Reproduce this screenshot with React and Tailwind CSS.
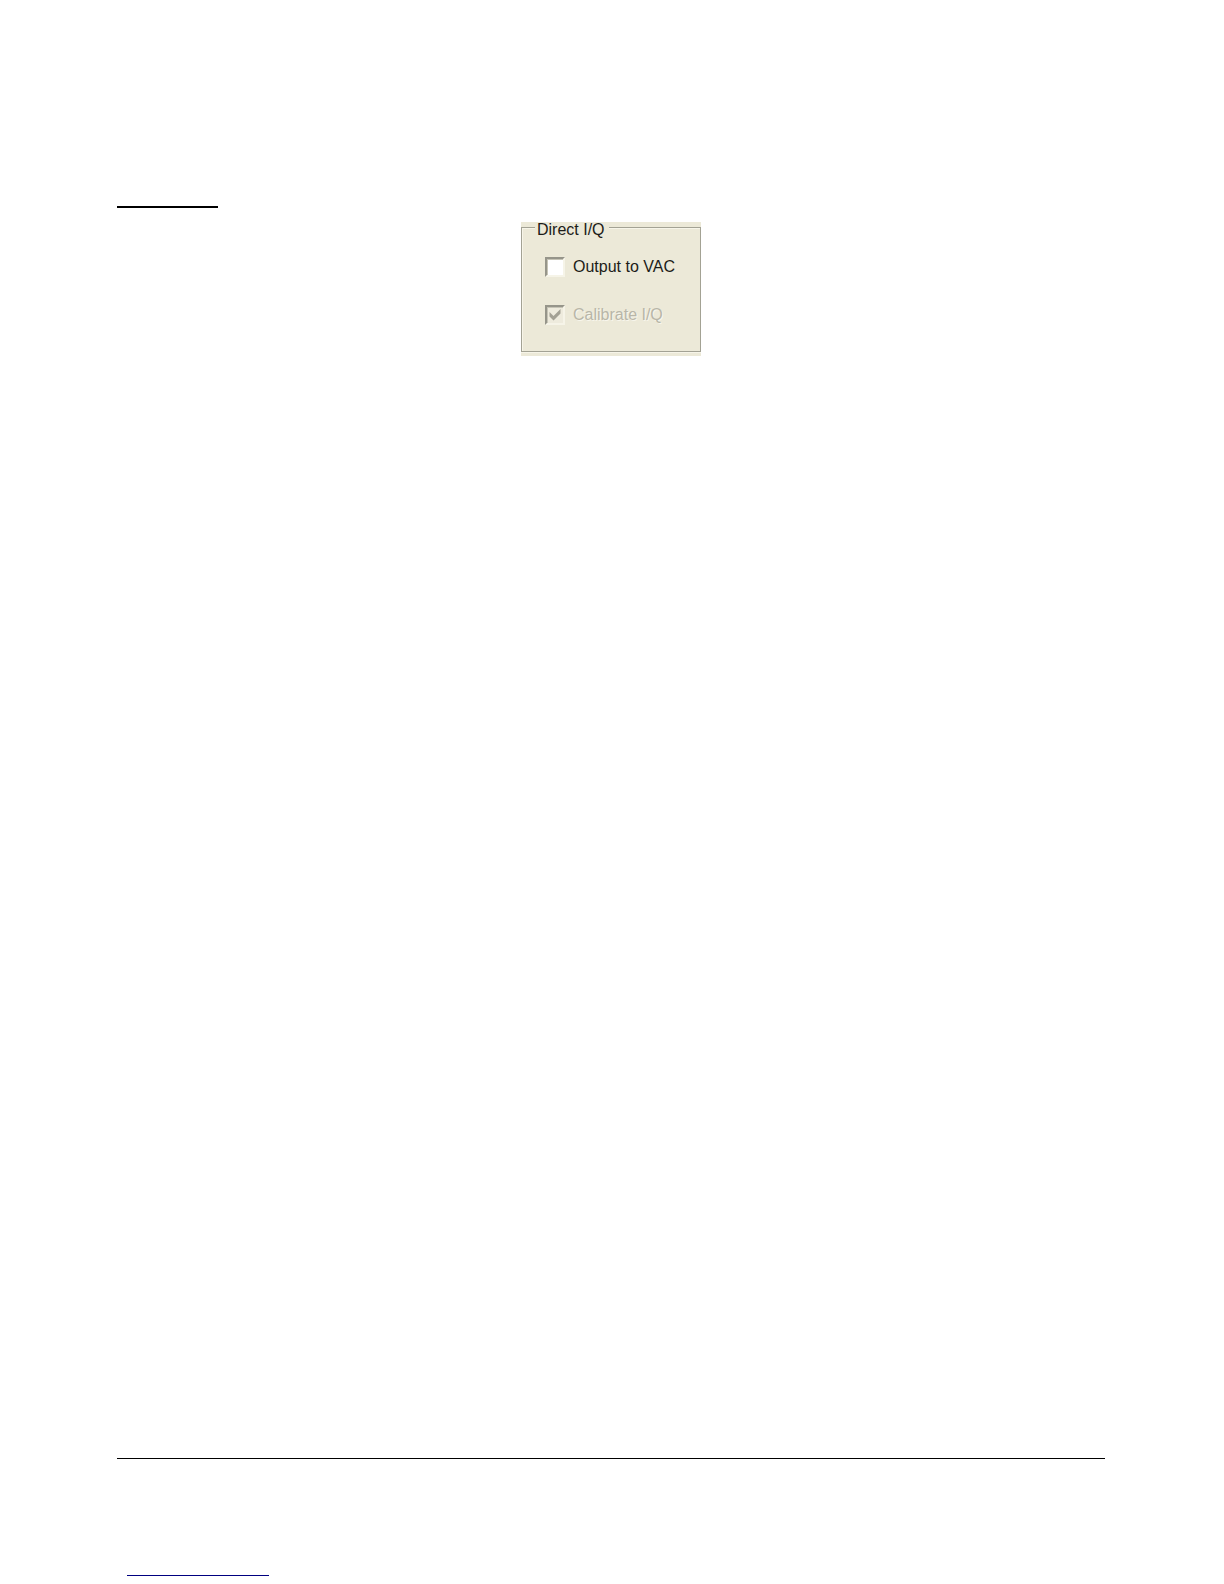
import React, { useState } from "react";

const CheckRow = ({ id, label, checked, disabled, onChange }) => (
	<div className="flex items-center gap-2">
		<span className="grid size-5 shrink-0 place-items-center">
			<input
				id={id}
				type="checkbox"
				checked={checked}
				disabled={disabled}
				onChange={onChange}
				className="col-start-1 row-start-1 size-5 appearance-none border-2 border-t-[#96958a] border-l-[#96958a] border-r-[#f6f4e8] border-b-[#f6f4e8] bg-white shadow-[inset_1px_1px_0_#c6c4b6] disabled:bg-[#eeebdd]"
			/>
			{checked && (
				<svg
					viewBox="0 0 20 20"
					className="pointer-events-none col-start-1 row-start-1 size-5"
					aria-hidden="true"
				>
					<path
						d="M4.5 7 L8.5 11 L15.5 4 V8.5 L8.5 15.5 L4.5 11.5 Z"
						fill="#a3a194"
					/>
				</svg>
			)}
		</span>
		<label
			htmlFor={id}
			className={`text-base leading-5 whitespace-nowrap ${
				disabled
					? "text-[#b8b6a8] text-shadow-[1px_1px_0_#f8f6ec]"
					: "text-[#1c1c18]"
			}`}
		>
			{label}
		</label>
	</div>
);

const DirectIQPanel = () => {
	const [outputToVac, setOutputToVac] = useState(false);

	return (
		<div className="mx-auto w-fit bg-[#ece9d8] pb-1">
			<fieldset className="w-[180px] border border-[#a3a294] pr-6 pb-6.5 pl-[23px] shadow-[inset_1px_1px_0_#f7f5e9,0_1px_0_#f7f5e9]">
				<legend className="-ml-2.5 h-[11px] bg-[#ece9d8] pr-1 pl-0.5 text-base leading-[15px] text-[#1c1c18]">
					Direct I/Q
				</legend>
				<div className="flex flex-col gap-7 pt-6">
					<CheckRow
						id="output-vac"
						label="Output to VAC"
						checked={outputToVac}
						onChange={(e) => setOutputToVac(e.target.checked)}
					/>
					<CheckRow
						id="calibrate-iq"
						label="Calibrate I/Q"
						checked
						disabled
						onChange={() => {}}
					/>
				</div>
			</fieldset>
		</div>
	);
};

const App = () => (
	<div className="flex min-h-screen flex-col bg-white pt-[206px] pr-[119px] pb-2 pl-[117px] font-['Liberation_Sans',Arial,sans-serif]">
		<main>
			<hr className="mb-3.5 w-[101px] border-t-2 border-black" />
			<DirectIQPanel />
		</main>

		<footer className="mt-auto">
			<hr className="border-t border-black" />
			<hr className="mt-[116px] ml-2.5 w-[142px] border-t border-[#000080]" />
		</footer>
	</div>
);

export default App;
